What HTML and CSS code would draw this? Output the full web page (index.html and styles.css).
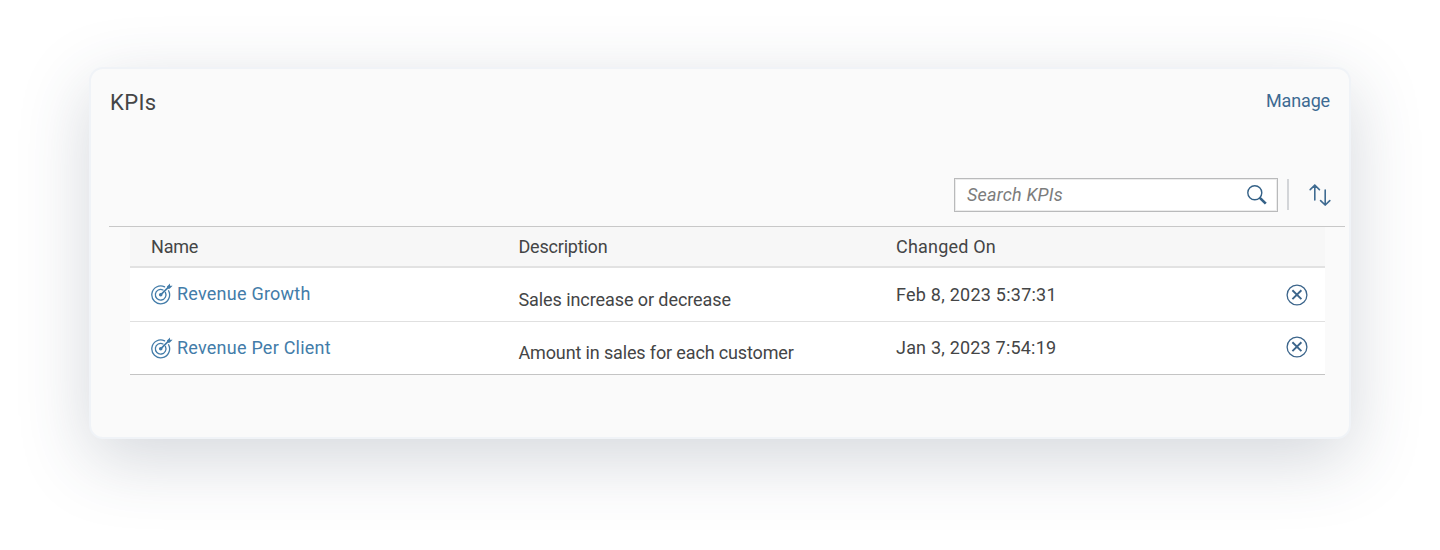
FILE: index.html
```html
<!DOCTYPE html>
<html lang="en">
<head>
<meta charset="utf-8">
<title>KPIs</title>
<link rel="stylesheet" href="styles.css">
</head>
<body>
<svg class="sprite" aria-hidden="true">
  <symbol id="target" viewBox="0 0 22 22">
    <g fill="none" stroke="currentColor" stroke-width="1.3" stroke-linecap="round">
      <path d="M17.6 7.8A8.9 8.9 0 1 1 13.6 3.9"/>
      <path d="M14.4 9.4A5.3 5.3 0 1 1 12 7"/>
      <path d="M9.9 11.6 18 3.6" stroke-width="1.6"/>
    </g>
    <circle cx="9.7" cy="11.8" r="1.8" fill="currentColor"/>
    <path d="M16 3.6 19 .6v2.2h2.6l-3 3h-2.6z" fill="currentColor"/>
  </symbol>
  <symbol id="decline" viewBox="0 0 22 22">
    <circle cx="11" cy="11" r="9.9" fill="none" stroke="currentColor" stroke-width="1.3"/>
    <path d="M6.4 6.2 15.4 15.1M15.4 6.2 6.4 15.1" fill="none" stroke="currentColor" stroke-width="1.9"/>
  </symbol>
</svg>
<main class="card">
  <header class="card-header">
    <h1 class="title">KPIs</h1>
    <a class="manage">Manage</a>
  </header>
  <div class="toolbar">
    <div class="search">
      <span class="placeholder">Search KPIs</span>
      <svg class="search-icon" viewBox="0 0 20 20" fill="none" stroke="currentColor">
        <circle cx="7.8" cy="7.8" r="7" stroke-width="1.4"/>
        <path d="M12.6 12.6 18.8 18.6" stroke-width="2.7"/>
      </svg>
    </div>
    <span class="separator"></span>
    <svg class="sort-icon" viewBox="0 0 22 22" fill="none" stroke="currentColor" stroke-width="1.6" stroke-linecap="round">
      <path d="M5.8 16V1.2M1.2 5.6 5.8 1.2l4.6 4.4M16.2 6v15M11.6 16.6l4.6 4.4 4.6-4.4"/>
    </svg>
  </div>
  <section class="table-area">
    <div class="table">
      <div class="row head">
        <span class="name-head">Name</span>
        <span class="desc-head">Description</span>
        <span class="date-head">Changed On</span>
      </div>
      <div class="row first">
        <a class="link"><svg class="target"><use href="#target"/></svg><span>Revenue Growth</span></a>
        <span class="desc">Sales increase or decrease</span>
        <span class="date">Feb 8, 2023 5:37:31</span>
        <svg class="decline"><use href="#decline"/></svg>
      </div>
      <div class="row last">
        <a class="link"><svg class="target"><use href="#target"/></svg><span>Revenue Per Client</span></a>
        <span class="desc desc-long">Amount in sales for each customer</span>
        <span class="date">Jan 3, 2023 7:54:19</span>
        <svg class="decline"><use href="#decline"/></svg>
      </div>
    </div>
  </section>
</main>
</body>
</html>
```
FILE: styles.css
```css
* { box-sizing: border-box; }
body {
  margin: 0;
  height: 550px;
  padding: 67px 89px 0;
  overflow: hidden;
  background: #fff;
  color: #444546;
  font: 18px/22px Roboto, "Liberation Sans", sans-serif;
  white-space: nowrap;
}
.sprite { display: none; }
.card {
  height: 372px;
  padding: 0 4px 0 18px;
  background: #fafafa;
  border: 2px solid #f0f3f7;
  border-radius: 14px;
  box-shadow: 0 20px 70px rgba(50, 68, 88, .21);
}
.card-header {
  height: 88px;
  padding: 20px 15px 0 1px;
  display: flex;
  justify-content: space-between;
}
.title { margin: 0; font-size: 22px; line-height: 28px; font-weight: 400; letter-spacing: .4px; }
.manage { color: #3d6a92; line-height: 24px; letter-spacing: -.15px; }
.toolbar {
  height: 69px;
  padding: 21px 14px 0 0;
  display: flex;
  justify-content: flex-end;
}
.search {
  width: 324px;
  height: 34px;
  padding: 0 10px 0 12px;
  display: flex;
  align-items: center;
  justify-content: space-between;
  background: #fff;
  border: 1px solid #b9babb;
  box-shadow: inset 0 0 0 1px #ececec;
}
.placeholder { color: #7c7c7c; font-style: italic; letter-spacing: .2px; }
.search-icon { width: 20px; height: 20px; color: #346187; }
.separator { width: 2px; height: 31px; margin: 1px 20px 0 9px; background: #d3d5d8; }
.sort-icon { width: 22px; height: 22px; margin-top: 6px; color: #3f6b91; }
.table-area { padding: 0 20px 0 21px; border-top: 1px solid #c8c8c8; }
.row {
  display: grid;
  grid-template-columns: 367.5px 377.5px 390px 22px;
  padding-left: 21px;
  align-items: center;
  background: #fff;
}
.head { height: 41px; padding-top: 1px; background: #f7f7f7; border-bottom: 2px solid #e2e2e2; }
.name-head { letter-spacing: -.2px; }
.desc-head { letter-spacing: -.2px; }
.date-head { letter-spacing: .2px; }
.first { height: 54px; border-bottom: 1px solid #e0e0e0; }
.last { height: 53px; padding-bottom: 1px; border-bottom: 1px solid #c4c4c4; }
.link { display: flex; align-items: center; gap: 4px; color: #437ca9; letter-spacing: .23px; }
.first .link { padding-bottom: 1px; }
.target { width: 22px; height: 22px; }
.decline { width: 22px; height: 22px; color: #3c658b; }
.last .decline { margin-bottom: 1px; }
.date { letter-spacing: .24px; }
.last .date { letter-spacing: .2px; }
.desc { padding-top: 10px; letter-spacing: -.08px; }
.desc-long { letter-spacing: -.14px; }
```
